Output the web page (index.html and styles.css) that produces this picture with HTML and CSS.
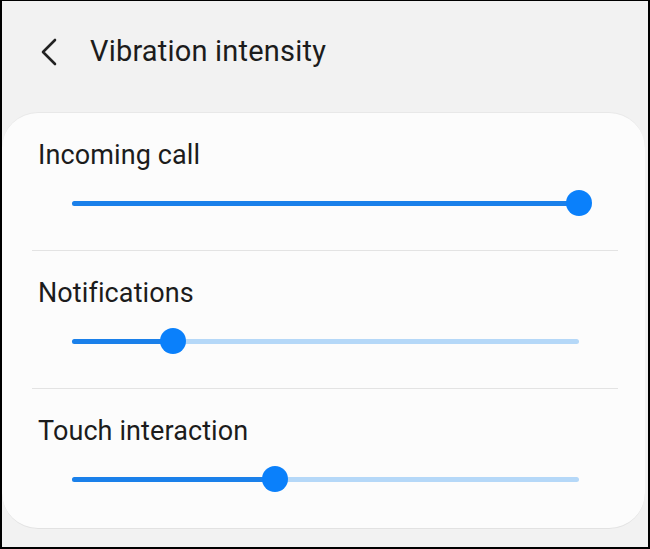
FILE: index.html
```html
<!DOCTYPE html>
<html>
<head>
<meta charset="utf-8">
<link rel="stylesheet" href="styles.css">
</head>
<body>
<div class="frame">
  <header class="header">
    <svg class="back" width="18" height="28" viewBox="0 0 18 28"><polyline points="15,2 3,14 15,26" fill="none" stroke="#222" stroke-width="2.6" stroke-linecap="round" stroke-linejoin="round"/></svg>
    <h1 class="title">Vibration intensity</h1>
  </header>
  <div class="card">
    <div class="section">
      <div class="label">Incoming call</div>
      <div class="slider">
        <div class="track">
          <div class="fill" style="width:100%"></div>
          <div class="thumb" style="left:100%"></div>
        </div>
      </div>
    </div>
    <div class="section">
      <div class="label">Notifications</div>
      <div class="slider">
        <div class="track">
          <div class="fill" style="width:20%"></div>
          <div class="thumb" style="left:20%"></div>
        </div>
      </div>
    </div>
    <div class="section last">
      <div class="label">Touch interaction</div>
      <div class="slider">
        <div class="track">
          <div class="fill" style="width:40%"></div>
          <div class="thumb" style="left:40%"></div>
        </div>
      </div>
    </div>
  </div>
</div>
</body>
</html>
```

FILE: styles.css
```css
html, body {
  margin: 0;
  padding: 0;
}
body {
  font-family: Roboto, "Liberation Sans", sans-serif;
  color: #1c1c1c;
}
.frame {
  width: 650px;
  height: 549px;
  box-sizing: border-box;
  border: 2px solid #000;
  border-top-width: 1px;
  background: #f2f2f2;
  display: flex;
  flex-direction: column;
}
.header {
  height: 111px;
  box-sizing: border-box;
  padding: 33px 0 0 38px;
  display: flex;
  align-items: flex-start;
}
.back {
  margin-top: 4px;
  margin-right: 32px;
}
.title {
  margin: 0;
  font-weight: 400;
  font-size: 29px;
  line-height: 34px;
  letter-spacing: 0.2px;
}
.card {
  background: #fcfcfc;
  border-radius: 36px;
  margin-right: 3px;
  border-top: 1px solid #e8e8e8;
  border-bottom: 1px solid #e2e2e2;
  display: flex;
  flex-direction: column;
}
.section {
  padding: 27px 0 34px 6px;
  margin: 0 27px 0 30px;
  border-bottom: 1px solid #e3e3e3;
}
.section.last {
  border-bottom: none;
  padding-bottom: 36px;
}
.label {
  font-size: 27px;
  line-height: 30px;
  height: 30px;
  letter-spacing: 0.1px;
}
.slider {
  margin-top: 20px;
  height: 26px;
  display: flex;
  align-items: center;
  padding: 0 39px 0 34px;
}
.track {
  position: relative;
  flex: 1;
  height: 5px;
  border-radius: 3px;
  background: #b5d8f8;
}
.fill {
  height: 100%;
  border-radius: 3px;
  background: #1a80ea;
}
.thumb {
  position: absolute;
  top: 50%;
  width: 26px;
  height: 26px;
  border-radius: 50%;
  background: #0a80fb;
  transform: translate(-50%, -50%);
}
```
